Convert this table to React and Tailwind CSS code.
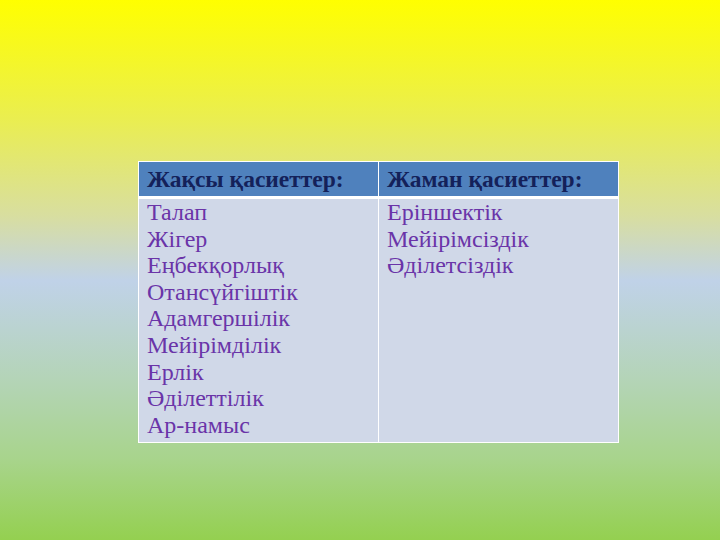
import React from 'react';

const good = ['Талап', 'Жігер', 'Еңбекқорлық', 'Отансүйгіштік', 'Адамгершілік', 'Мейірімділік', 'Ерлік', 'Әділеттілік', 'Ар-намыс'];
const bad = ['Еріншектік', 'Мейірімсіздік', 'Әділетсіздік'];

export default function App() {
  return (
    <div
      className="w-[720px] h-[540px] overflow-hidden bg-[linear-gradient(to_bottom,#ffff00_0%,#eaee50_22%,#d8dea0_40%,#c0d2e8_52%,#b4d4b8_70%,#a8d48c_85%,#94d050_100%)] pt-[161px] pl-[138px]"
      style={{ fontFamily: '"Liberation Serif", "DejaVu Serif", serif' }}
    >
      <div className="w-[481px] border border-white">
        <div className="grid grid-cols-[240px_1fr] bg-[#4f81bd] border-b-[3px] border-white h-[37px]">
          <div className="border-r border-white px-[8px] pt-[5px] text-[23.5px] font-bold text-[#14215a] leading-[24px] whitespace-nowrap">Жақсы қасиеттер:</div>
          <div className="px-[8px] pt-[5px] text-[23.5px] font-bold text-[#14215a] leading-[24px] whitespace-nowrap">Жаман қасиеттер:</div>
        </div>
        <div className="grid grid-cols-[240px_1fr] bg-[#d0d8e8] h-[243px]">
          <div className="border-r border-white px-[8px] text-[24px] text-[#6a34a8] leading-[26.6px]">
            {good.map((t) => (
              <div key={t}>{t}</div>
            ))}
          </div>
          <div className="px-[8px] text-[24px] text-[#6a34a8] leading-[26.6px]">
            {bad.map((t) => (
              <div key={t}>{t}</div>
            ))}
          </div>
        </div>
      </div>
    </div>
  );
}
